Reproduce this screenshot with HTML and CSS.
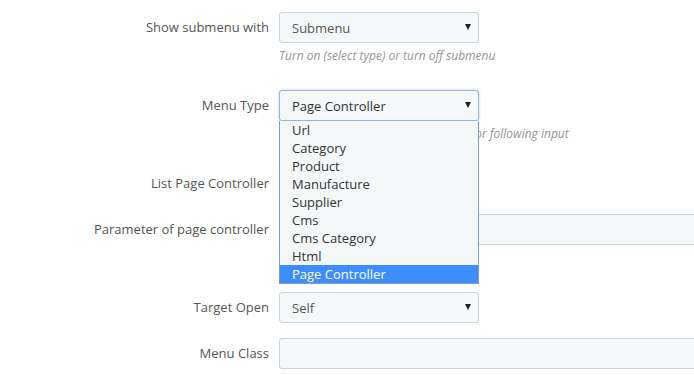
FILE: index.html
```html
<!DOCTYPE html>
<html>
  <head>
    <title>Menu item</title>
    <link rel="stylesheet" href="styles.css">
  </head>
  <body>
    <form class="menu-form">
      <div class="form-group">
        <label class="control-label">Show submenu with</label>
        <div class="control">
          <span class="select-wrap">
            <select class="form-control short">
              <option>Submenu</option>
            </select>
          </span>
          <p class="help-block">Turn on (select type) or turn off submenu</p>
        </div>
      </div>

      <div class="form-group">
        <label class="control-label">Menu Type</label>
        <div class="control">
          <span class="select-wrap open">
            <select class="form-control short focused">
              <option>Page Controller</option>
            </select>
            <ul class="dropdown">
              <li>Url</li>
              <li>Category</li>
              <li>Product</li>
              <li>Manufacture</li>
              <li>Supplier</li>
              <li>Cms</li>
              <li>Cms Category</li>
              <li>Html</li>
              <li class="selected">Page Controller</li>
            </ul>
          </span>
          <p class="help-block">Select type of menu then set a value for following input</p>
        </div>
      </div>

      <div class="form-group">
        <label class="control-label">List Page Controller</label>
        <div class="control">
          <span class="select-wrap">
            <select class="form-control short">
              <option>Index</option>
            </select>
          </span>
        </div>
      </div>

      <div class="form-group spaced">
        <label class="control-label">Parameter of page controller</label>
        <div class="control">
          <input type="text" class="form-control wide" />
        </div>
      </div>

      <div class="form-group">
        <label class="control-label">Target Open</label>
        <div class="control">
          <span class="select-wrap">
            <select class="form-control short">
              <option>Self</option>
            </select>
          </span>
        </div>
      </div>

      <div class="form-group">
        <label class="control-label">Menu Class</label>
        <div class="control">
          <input type="text" class="form-control wide" />
        </div>
      </div>
    </form>
  </body>
</html>
```

FILE: styles.css
```css
html,
body {
  overflow: hidden;
}
body {
  margin: 0;
  background-color: #fff;
  font-family: "Open Sans", "Liberation Sans", sans-serif;
  font-size: 13px;
  color: #555;
}
.menu-form {
  padding-top: 12px;
  width: 900px;
}
.form-group {
  display: flex;
  align-items: flex-start;
  margin-bottom: 15px;
}
/* row whose help text sits under the open list */
.form-group.spaced {
  margin-bottom: 47px;
}
.control-label {
  width: 279px;
  padding-right: 10px;
  box-sizing: border-box;
  text-align: right;
  line-height: 31px;
  color: #555;
}
.control {
  flex: 1;
}
.select-wrap {
  position: relative;
  display: inline-block;
  vertical-align: top;
}
.select-wrap::after {
  content: "";
  position: absolute;
  right: 8px;
  top: 12px;
  border-left: 3px solid transparent;
  border-right: 3px solid transparent;
  border-top: 6px solid #222;
  pointer-events: none;
}
.form-control {
  display: block;
  height: 31px;
  box-sizing: border-box;
  margin: 0;
  padding: 0 12px;
  font-family: inherit;
  font-size: 13px;
  color: #555;
  background-color: #f5f8f9;
  border: 1px solid #c7d6db;
  border-radius: 3px;
}
select.form-control {
  -webkit-appearance: none;
  appearance: none;
  padding-left: 12px;
}
.short {
  width: 200px;
}
.wide {
  width: 560px;
}
.focused {
  border-color: #93b5dd;
  box-shadow: 0 0 3px rgba(102, 150, 220, 0.45);
  color: #333;
}
.help-block {
  margin: 4px 0 10px;
  line-height: 18px;
  font-size: 12px;
  font-style: italic;
  color: #959595;
}
.dropdown {
  position: absolute;
  top: 31px;
  left: 0;
  z-index: 10;
  width: 200px;
  box-sizing: border-box;
  margin: 0;
  padding: 0;
  list-style: none;
  background-color: #f5f8f9;
  border: 1px solid #7f9cc6;
  border-top: none;
}
.dropdown li {
  height: 18px;
  line-height: 18px;
  padding-left: 12px;
  color: #333;
}
.dropdown li.selected {
  background-color: #3d8dfc;
  color: #fff;
}
```
